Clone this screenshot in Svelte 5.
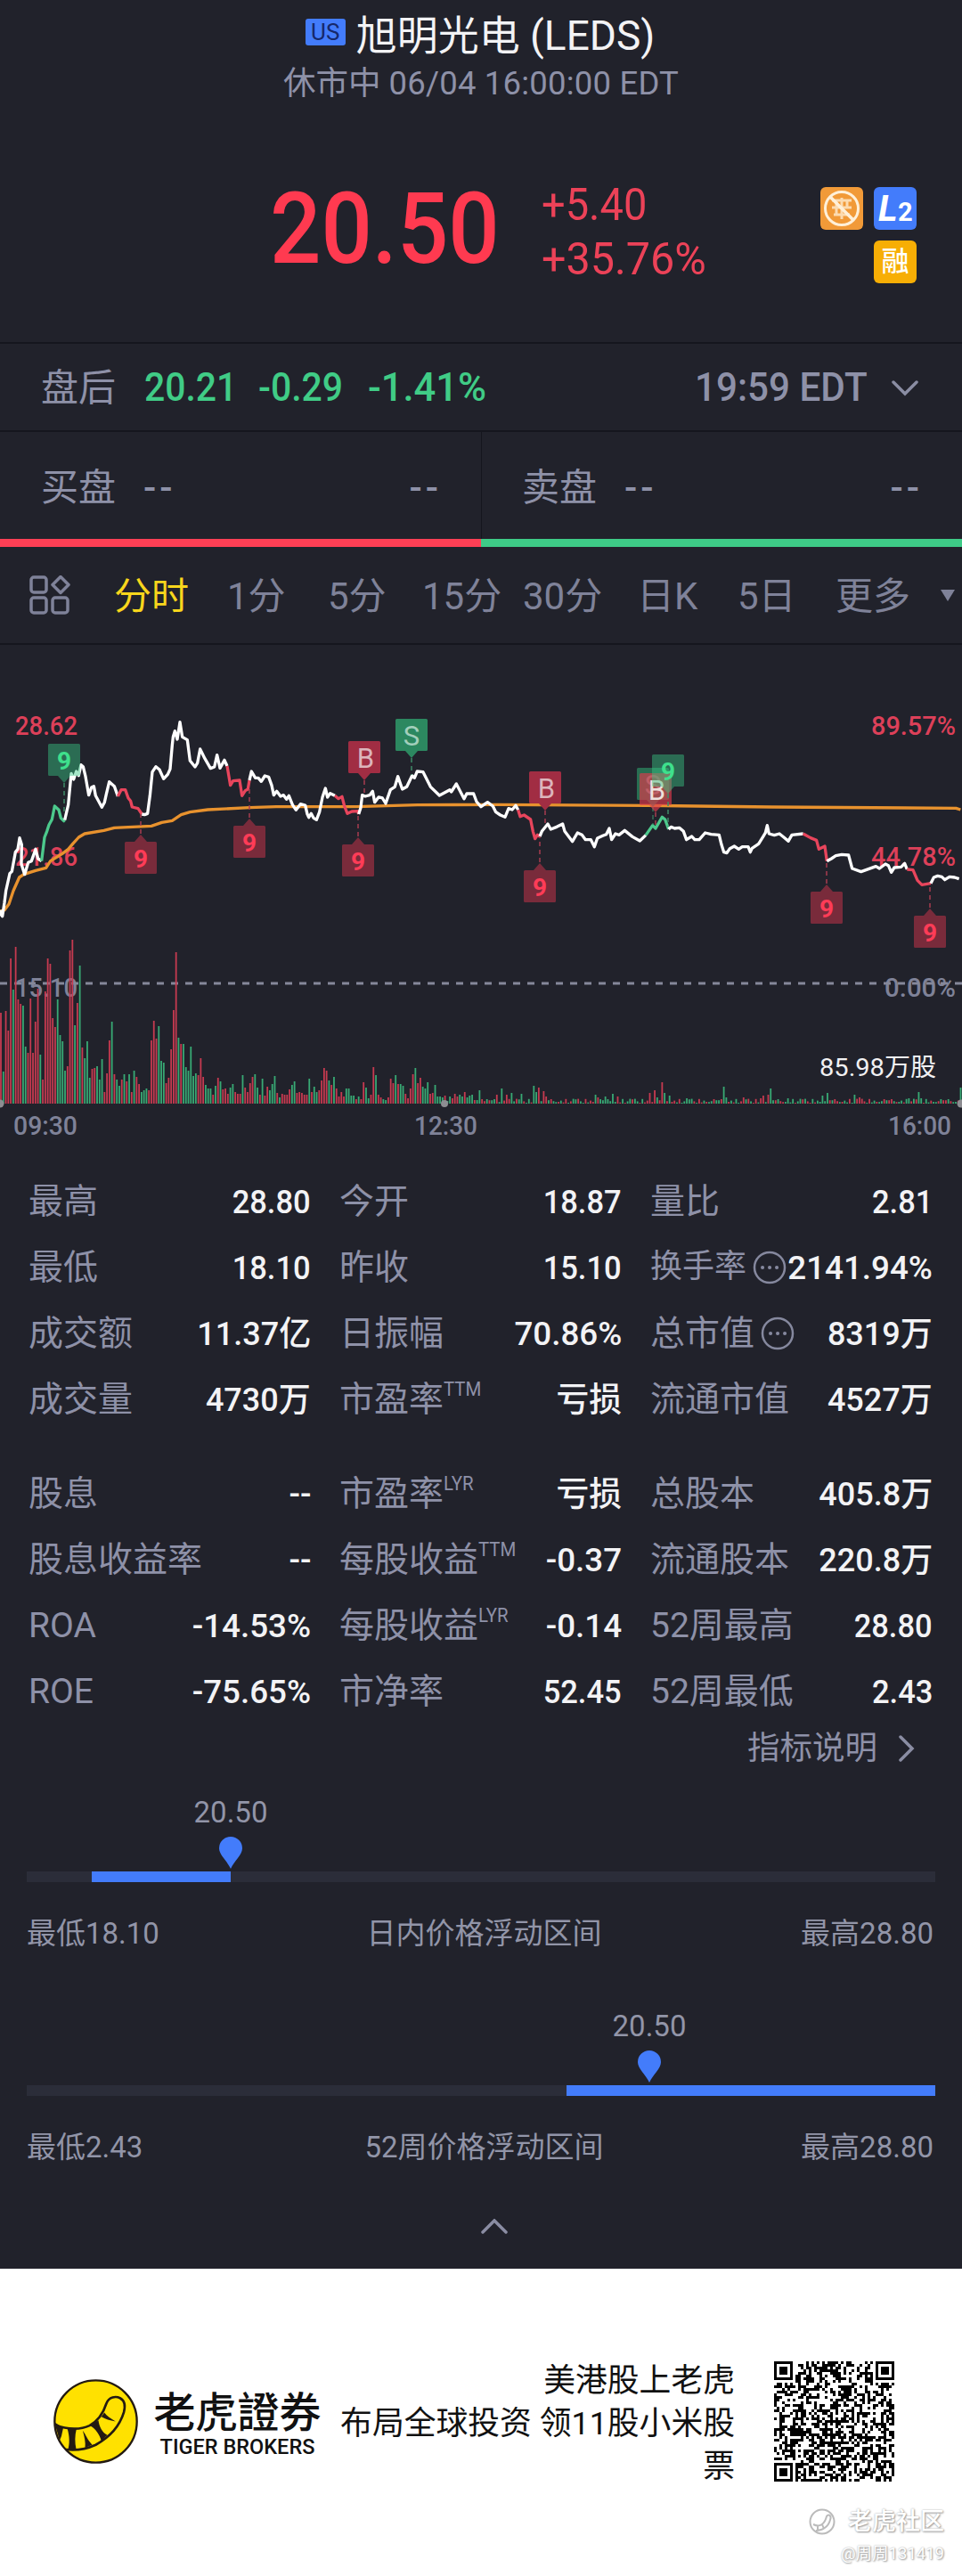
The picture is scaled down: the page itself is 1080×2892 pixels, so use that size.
<script lang="ts">
  const tabs = [
    { label: '分时', width: 83, gap: 44 },
    { label: '1分', width: 61, gap: 52 },
    { label: '5分', width: 63, gap: 43 },
    { label: '15分', width: 84, gap: 29 },
    { label: '30分', width: 87, gap: 41 },
    { label: '日K', width: 65, gap: 48 },
    { label: '5日', width: 59, gap: 51 },
    { label: '更多', width: 78, gap: 39 }
  ];

  const stats = [
    [
      { label: '最高', value: '28.80' },
      { label: '今开', value: '18.87' },
      { label: '量比', value: '2.81' },
      { label: '最低', value: '18.10' },
      { label: '昨收', value: '15.10' },
      { label: '换手率', value: '2141.94%', info: true, tight: true },
      { label: '成交额', value: '11.37亿' },
      { label: '日振幅', value: '70.86%' },
      { label: '总市值', value: '8319万', info: true },
      { label: '成交量', value: '4730万' },
      { label: '市盈率', sup: 'TTM', value: '亏损' },
      { label: '流通市值', value: '4527万' }
    ],
    [
      { label: '股息', value: '--' },
      { label: '市盈率', sup: 'LYR', value: '亏损' },
      { label: '总股本', value: '405.8万' },
      { label: '股息收益率', value: '--' },
      { label: '每股收益', sup: 'TTM', value: '-0.37' },
      { label: '流通股本', value: '220.8万' },
      { label: 'ROA', value: '-14.53%' },
      { label: '每股收益', sup: 'LYR', value: '-0.14' },
      { label: '52周最高', value: '28.80' },
      { label: 'ROE', value: '-75.65%' },
      { label: '市净率', value: '52.45' },
      { label: '52周最低', value: '2.43' }
    ]
  ];

  const ranges = [
    { title: '日内价格浮动区间', low: '最低18.10', high: '最高28.80', from: 73, to: 229, pin: 229 },
    { title: '52周价格浮动区间', low: '最低2.43', high: '最高28.80', from: 606, to: 1020, pin: 699 }
  ];

  // price line, three units to a pixel, split where the colour changes
  const price = [
    { tone: 'flat', dx: 0, d: '0,845 3,860 8,866 15,820 20,780 33,722 40,715 52,650 60,640 66,602 73,625 72,690 83,725 95,685 106,680 120,640 128,672 140,680' },
    { tone: 'up', dx: 0, d: '140,680 150,600 158,580 165,558 175,540 184,495 198,508 205,535 215,545 218,542' },
    { tone: 'flat', dx: 0, d: '218,542 230,490 240,385 248,405 257,378 265,392 273,356 280,362 288,395 299,458 308,432 316,428 322,460 343,499 352,482 358,455 368,413 385,428 397,462' },
    { tone: 'down', dx: 0, d: '397,462 408,440 422,440 432,468 440,478 445,498 465,503 478,522' },
    { tone: 'flat', dx: 0, d: '478,522 487,524 497,520 505,460 513,380 525,362 537,372 551,403 565,388 573,370 580,290 583,262 589,242 597,270 606,212 614,262 631,272 640,342 657,363 665,350 674,303 690,335 709,368 722,363 731,323 741,367 756,340 765,360' },
    { tone: 'down', dx: 0, d: '765,360 776,425 785,410 807,408 815,460 826,443 835,438 840,408' },
    { tone: 'flat', dx: 0, d: '840,408 847,378 860,400 870,400 880,412 892,393 905,397 915,425 922,458 932,445 945,462 955,458 965,472 973,460 985,490 997,508 1012,488 1028,492 1035,522 1040,533 1048,520 1056,535 1066,541 1076,515 1086,465 1096,435 1103,465 1112,452 1128,460' },
    { tone: 'down', dx: 1080, d: '48,460 60,470 72,463 80,495 90,520 105,513 125,512 128,522' },
    { tone: 'flat', dx: 1080, d: '128,522 135,500 140,458 150,462 165,458 175,445 182,482 195,465 208,468 219,486 235,440 250,430 260,395 275,438 290,430 308,392 316,400 325,378 345,380 370,430 400,459 435,440 440,447 457,420 483,470 492,453 515,453 525,480 540,497 562,482 580,495 590,515 605,525 621,532 633,503 645,507 657,493 665,508' },
    { tone: 'down', dx: 1080, d: '665,508 672,530 685,525 707,540 715,580 722,605 730,592 738,597' },
    { tone: 'flat', dx: 1080, d: '738,597 745,580 765,555 775,573 795,565 815,555 822,580 848,614 865,585 880,592 892,608 910,608 922,632 932,603 950,595 962,590 972,570 980,608 993,588 1005,592 1024,577 1050,598 1075,612 1095,593' },
    { tone: 'up', dx: 1080, d: '1095,593 1118,560 1128,570 1150,532 1160,540 1172,573' },
    { tone: 'flat', dx: 2100, d: '152,573 160,565 172,570 188,568 202,580 212,608 230,597 240,608 255,608 275,585 295,590 322,592 330,625 338,650 348,653 358,638 373,630 388,640 400,632 420,632 427,650 433,637 455,622 470,598 478,585 484,560 490,588 508,593 525,588 540,600 555,613 567,592 605,588' },
    { tone: 'down', dx: 2100, d: '605,588 630,602 650,610 658,640 678,630 685,680' },
    { tone: 'flat', dx: 2100, d: '685,680 700,672 715,662 735,658 758,660 770,705 800,716 825,707 850,698 862,705 882,690 892,695 902,718 912,702 935,700 947,688 955,708' },
    { tone: 'down', dx: 2100, d: '955,708 975,710 990,745 1005,760 1035,755' },
    { tone: 'flat', dx: 2100, d: '1035,755 1045,735 1058,730 1072,733 1082,743 1098,733 1115,735 1130,740' }
  ];

  const average = '0,850 15,845 30,825 45,780 65,735 80,725 120,712 155,703 170,680 210,655 230,640 245,622 265,600 285,588 350,577 385,568 510,562 545,550 580,544 610,524 640,515 700,507 840,500 930,497 1200,497 1405,491 1680,490 2180,493 2600,498 3220,502 3235,507';

  // x = left edge of the tag, y = top edge, stem = where the dashed line ends
  const tags = [
    { x: 54, y: 835, text: '9', kind: 'nine-up', down: true, stem: 912 },
    { x: 140, y: 945, text: '9', kind: 'nine-down', down: false, stem: 914 },
    { x: 262, y: 927, text: '9', kind: 'nine-down', down: false, stem: 886 },
    { x: 384, y: 948, text: '9', kind: 'nine-down', down: false, stem: 914 },
    { x: 391, y: 832, text: 'B', kind: 'buy-tag', down: true, stem: 890 },
    { x: 444, y: 807, text: 'S', kind: 'sell-tag', down: true, stem: 870 },
    { x: 588, y: 977, text: '9', kind: 'nine-down', down: false, stem: 939 },
    { x: 594, y: 866, text: 'B', kind: 'buy-tag', down: true, stem: 924 },
    { x: 715, y: 862, text: 'S', kind: 'sell-tag faded', down: true, stem: 926 },
    { x: 718, y: 868, text: 'B', kind: 'buy-tag mixed', down: true, stem: 928 },
    { x: 732, y: 847, text: '9', kind: 'nine-up', down: true, stem: 928 },
    { x: 910, y: 1001, text: '9', kind: 'nine-down', down: false, stem: 967 },
    { x: 1026, y: 1028, text: '9', kind: 'nine-down', down: false, stem: 993 }
  ];

  const volume = (
    'r102 g36 r104 r82 r163 g128 r176 r117 r112 g110 g64 r57 r118 r57 r92 r129 g55 r27 r126 r163 r157 r96 r86 g117 g77 g70 ' +
    'g37 r42 r172 r184 g88 r113 g155 r63 g51 g70 g29 r39 r40 g42 g27 g50 r13 r34 r71 g92 r33 g27 g20 r27 g33 r25 g33 r13 ' +
    'g37 r30 r22 g13 g15 g17 r15 r71 r93 r73 g87 g48 g46 r23 r29 r61 r105 r170 g74 r67 g67 g41 g37 g64 g31 g34 r32 r51 r30 ' +
    'g21 g17 g17 r10 g20 r29 g25 r16 r17 r11 g18 g22 r13 r11 r11 g32 r18 r13 r23 r30 g33 g18 r10 g28 r9 r19 g15 g22 g31 ' +
    'r12 g7 r11 r10 r10 r16 g21 g25 r12 r13 r12 r10 r10 g28 r13 g19 g13 r15 r26 r40 r37 g26 r21 g30 r17 r8 r13 r8 g17 g17 ' +
    'g9 g9 r5 g8 r5 r24 g18 g6 r10 r41 g32 r10 r7 g5 g4 r7 r28 r23 g32 r22 g22 g20 r11 r6 r17 r33 g40 r23 r29 g19 g17 g24 ' +
    'r11 r12 g21 g8 g8 g7 r9 g3 g8 r6 r11 r8 g10 g8 r13 g7 g9 g10 r4 g4 g15 r5'
  ).split(' ');

  // single minutes that stand out in the quiet afternoon
  const spikes = {
    201: 'r10', 203: 'g17', 205: 'r10', 207: 'g12', 211: 'g11', 216: 'g20', 217: 'g13', 218: 'r18', 220: 'r14', 221: 'r8',
    241: 'g10', 242: 'r7', 245: 'g8', 248: 'g11', 250: 'r8', 263: 'r12', 265: 'r15', 266: 'g7', 268: 'r24', 269: 'g12',
    271: 'g9', 278: 'g6', 293: 'g19', 294: 'g7', 301: 'r7', 308: 'r6', 309: 'r9', 311: 'r10', 312: 'g17', 319: 'g6',
    333: 'g9', 335: 'g12', 346: 'g10', 348: 'r7', 368: 'g6', 372: 'g13', 373: 'g6', 389: 'g18'
  };

  const bars = Array.from({ length: 390 }, (_, i) => {
    const quiet = (i * 7 + 3) % 11 < 5 ? 'r' : 'g';
    const item = volume[i] ?? spikes[i] ?? quiet + (1 + ((i * i * 3 + i * 5) % 23) / 5);
    return { x: 1 + i * 2.77, h: Number(item.slice(1)), up: item[0] === 'r' };
  });

  // plain prices are set narrower than percentages and amounts
  function squeeze(value) {
    if (/^[\d.]+$/.test(value)) return 'narrow';
    if (/^\d.*[万亿]$/.test(value)) return 'amount';
    return '';
  }

  const SIZE = 45;

  function finder(x, y) {
    for (const [fx, fy] of [[0, 0], [SIZE - 7, 0], [0, SIZE - 7]]) {
      const dx = x - fx;
      const dy = y - fy;
      if (dx < -1 || dy < -1 || dx > 7 || dy > 7) continue;
      const ring = Math.max(Math.abs(dx - 3), Math.abs(dy - 3));
      return ring === 3 || ring < 2 ? 1 : 0;
    }
    return -1;
  }

  function qrPath() {
    let d = '';
    let seed = 131419;
    for (let y = 0; y < SIZE; y++) {
      for (let x = 0; x < SIZE; x++) {
        seed = (seed * 1103515245 + 12345) % 2147483648;
        const f = finder(x, y);
        if (f === 1 || (f === -1 && seed / 2147483648 < 0.5)) d += `M${x} ${y}h1v1h-1z`;
      }
    }
    return d;
  }
</script>

<div class="page">
  <header class="top">
    <div class="title">
      <span class="market">US</span>
      <h1>旭明光电 (LEDS)</h1>
    </div>
    <p class="status">休市中 <span class="clock">06/04 16:00:00 EDT</span></p>
  </header>

  <section class="quote">
    <div class="last"><span class="num">20.50</span></div>
    <div class="change">
      <span class="num">+5.40</span>
      <span class="num percent">+35.76%</span>
    </div>
    <div class="badges">
      <svg class="badge" viewBox="0 0 48 48">
        <rect width="48" height="48" rx="6" fill="#f19a38" />
        <g fill="none" stroke="#fff0d8" stroke-width="3">
          <path d="M13 15h22M13 23h22M15 31h18M24 12v24M18 15v16M30 15v8" opacity=".75" />
          <circle cx="24" cy="24" r="18.5" />
          <path d="M11 11l26 26" stroke-width="3.5" />
        </g>
      </svg>
      <svg class="badge" viewBox="0 0 48 48">
        <rect width="48" height="48" rx="6" fill="#437cfb" />
        <text x="5" y="38" class="l2 big">L</text>
        <text x="27" y="38" class="l2">2</text>
      </svg>
      <span class="badge margin">融</span>
    </div>
  </section>

  <section class="after">
    <span class="name">盘后</span>
    <span class="num green p1">20.21</span>
    <span class="num green p2">-0.29</span>
    <span class="num green p3">-1.41%</span>
    <span class="num time">19:59 EDT</span>
    <svg class="chevron" viewBox="0 0 30 18"><path d="M2 2l13 13L28 2" /></svg>
  </section>

  <section class="book">
    <div class="side buy">
      <span>买盘</span><span class="dash">--</span><span class="dash end">--</span>
    </div>
    <div class="side sell">
      <span>卖盘</span><span class="dash">--</span><span class="dash end">--</span>
    </div>
  </section>

  <nav class="tabs">
    <svg class="grid-icon" viewBox="0 0 46 44">
      <rect x="2" y="2" width="17" height="17" rx="3" />
      <path d="M35 1.500l9 9-9 9-9-9z" stroke-linejoin="round" />
      <rect x="2" y="25" width="17" height="17" rx="3" />
      <rect x="26" y="25" width="17" height="17" rx="3" />
    </svg>
    {#each tabs as tab, i}
      <span class="tab" class:active={i === 0} style="width: {tab.width}px; margin-right: {tab.gap}px">{tab.label}</span>
    {/each}
    <svg class="more" viewBox="0 0 18 15"><path d="M1 1h16L9 14z" /></svg>
  </nav>

  <svg class="chart" viewBox="0 724 1080 566">
    <g class="axis red">
      <text x="17" y="825" textLength="70" lengthAdjust="spacingAndGlyphs">28.62</text>
      <text x="17" y="972" textLength="70" lengthAdjust="spacingAndGlyphs">21.86</text>
      <text x="978" y="825" textLength="95" lengthAdjust="spacingAndGlyphs">89.57%</text>
      <text x="978" y="972" textLength="95" lengthAdjust="spacingAndGlyphs">44.78%</text>
    </g>
    <g class="axis">
      <text x="17" y="1119" textLength="70" lengthAdjust="spacingAndGlyphs">15.10</text>
      <text x="993" y="1119" textLength="80" lengthAdjust="spacingAndGlyphs">0.00%</text>
    </g>
    <line class="zero" x1="0" y1="1104" x2="1080" y2="1104" />

    {#each bars as bar}
      <rect x={bar.x - 0.9} y={1239 - bar.h} width="1.800" height={bar.h} class={bar.up ? 'vol-up' : 'vol-down'} />
    {/each}

    <g transform="translate(0 740) scale(.33333)">
      <polyline class="average" points={average} />
      {#each price as part}
        <polyline class="line {part.tone}" points={part.d} transform="translate({part.dx} 0)" />
      {/each}
    </g>

    {#each tags as tag}
      <g class="tag {tag.kind}" transform="translate({tag.x} {tag.y})">
        {#if tag.down}
          <line x1="18" x2="18" y1="44" y2={tag.stem - tag.y} />
          <path d="M1.500 0h33q1.500 0 1.500 1.500v33q0 1.500-1.500 1.500H25l-7 8-7-8H1.500Q0 36 0 34.500v-33Q0 0 1.500 0z" />
        {:else}
          <line x1="18" x2="18" y1="-9" y2={tag.stem - tag.y} />
          <path d="M1.500 0H11l7-8 7 8h9.500q1.500 0 1.500 1.500v33q0 1.500-1.500 1.500h-33Q0 36 0 34.500v-33Q0 0 1.500 0z" />
        {/if}
        <text x={tag.text === 'B' ? 19.500 : 18} y={tag.text === '9' ? 28.500 : 30}>{tag.text}</text>
      </g>
    {/each}

    <text class="shares" x="920" y="1208" textLength="131" lengthAdjust="spacingAndGlyphs">85.98万股</text>

    <g fill="#8d8d92">
      <circle cx="0" cy="1239" r="4.500" />
      <circle cx="499" cy="1239" r="4" />
      <circle cx="1079" cy="1239" r="4.500" />
    </g>
    <g class="axis">
      <text x="15" y="1274" textLength="72" lengthAdjust="spacingAndGlyphs">09:30</text>
      <text x="465" y="1274" textLength="71" lengthAdjust="spacingAndGlyphs">12:30</text>
      <text x="997" y="1274" textLength="71" lengthAdjust="spacingAndGlyphs">16:00</text>
    </g>
  </svg>

  <section class="stats">
    {#each stats as group}
      <div class="group">
        {#each group as item}
          <div class="stat">
            <span class="label" class:tight={item.tight}>
              {item.label}{#if item.sup}<sup>{item.sup}</sup>{/if}
            </span>
            {#if item.info}
              <svg class="info" class:pull={item.tight} viewBox="0 0 38 38">
                <circle cx="19" cy="19" r="17" />
                <path d="M11 19h.1M19 19h.1M27 19h.1" />
              </svg>
            {/if}
            <span class="value num {squeeze(item.value)}">{item.value}</span>
          </div>
        {/each}
      </div>
    {/each}
    <div class="explain">
      <span>指标说明</span>
      <svg viewBox="0 0 18 30"><path d="M2 2l13 13L2 28" /></svg>
    </div>
  </section>

  <section class="ranges">
    {#each ranges as range}
      <div class="range">
        <div class="pointer" style="margin-left: {range.pin - 60}px">
          <span>20.50</span>
          <svg viewBox="0 0 26 36"><path d="M13 36C9 27 0 20.500 0 13a13 13 0 0 1 26 0C26 20.500 17 27 13 36z" /></svg>
        </div>
        <div class="track">
          <div class="fill" style="margin-left: {range.from}px; width: {range.to - range.from}px"></div>
        </div>
        <div class="legend">
          <span>{range.low}</span>
          <span class="name">{range.title}</span>
          <span class="high">{range.high}</span>
        </div>
      </div>
    {/each}
    <svg class="collapse" viewBox="0 0 30 18"><path d="M2 15L15 2l13 13" /></svg>
  </section>

  <footer>
    <svg class="logo" viewBox="30 33 286 286">
      <circle cx="173" cy="176" r="139" fill="#ffe100" stroke="#231a12" stroke-width="7" />
      <g fill="none" stroke="#231a12" stroke-width="8">
        <path d="M36 187C80 206 125 203 152 190C186 172 200 143 209 115C218 92 241 90 255 97C272 106 274 122 268 145C252 198 215 232 173 255C140 270 105 275 72 271" />
      </g>
      <g fill="#231a12">
        <path d="M33 178l30 20-6 28-6 14z" />
        <path d="M77 200h31c-6 24-6 46-1 70l-28 2c6-20 6-46-2-72z" />
        <path d="M129 207c12 16 14 28 32 48l-24 10c2-20-2-36-8-58z" />
        <path d="M154 190l28-18c3 22 12 40 30 50l-20 20c-6-22-18-40-38-52z" />
        <path d="M192 160l10-14c8 12 22 20 38 30-20-4-34-8-48-16z" />
      </g>
    </svg>
    <div class="brand">
      <strong>老虎證券</strong>
      <span>TIGER BROKERS</span>
    </div>
    <p class="slogan">美港股上老虎<br />布局全球投资 领11股小米股票</p>
    <svg class="qr" viewBox="0 0 45 45" shape-rendering="crispEdges"><path d={qrPath()} /></svg>
    <div class="watermark">
      <div class="community">
        <svg viewBox="0 0 30 30">
          <circle cx="15" cy="15" r="13.500" />
          <path d="M5 18c8 4 13-1 15-9 2-3 6-1 4 4-2 8-9 12-16 12M10 19v5M15 18l2 5" />
        </svg>
        <span>老虎社区</span>
      </div>
      <span class="user">@周周131419</span>
    </div>
  </footer>
</div>

<style>
  :global(body) {
    margin: 0;
    background: #fff;
  }

  .page {
    width: 1080px;
    height: 2892px;
    overflow: hidden;
    color: #8e91a8;
    background: #21222b;
    font-family: Roboto, 'Noto Sans CJK SC', sans-serif;
    line-height: 1.2;
  }

  .num {
    display: inline-block;
    transform-origin: left;
  }

  svg {
    display: block;
    flex: none;
  }

  .top {
    height: 130px;
    padding-top: 9px;
    box-sizing: border-box;
  }

  .title {
    display: flex;
    justify-content: center;
    gap: 12px;
    height: 62px;
    margin-right: 2px;
  }

  .market {
    width: 45px;
    height: 30px;
    margin-top: 12px;
    border-radius: 3px;
    background: #437cfb;
    color: #16286a;
    font-size: 26px;
    line-height: 31px;
    text-align: center;
  }

  h1 {
    margin: 0;
    color: #f3f3f5;
    font-size: 46px;
    font-weight: 400;
    line-height: 62px;
  }

  .status {
    margin: 0;
    font-size: 36.500px;
    line-height: 46px;
    text-align: center;
  }

  .clock {
    letter-spacing: 0.2px;
  }

  .quote {
    display: flex;
    height: 254px;
    padding-left: 303px;
  }

  .last {
    width: 305px;
    color: #ff3a50;
    font-size: 111px;
    font-weight: 500;
    line-height: 254px;
  }

  .last .num {
    transform: scaleX(0.91);
  }

  .change {
    display: flex;
    flex-direction: column;
    width: 313px;
    padding-top: 70px;
    color: #ec4258;
    font-size: 50px;
    line-height: 61px;
  }

  .change .num {
    transform: scaleX(0.94);
  }

  .change .percent {
    transform: scaleX(0.97);
  }

  .badges {
    display: flex;
    flex-wrap: wrap;
    align-content: flex-start;
    justify-content: flex-end;
    gap: 12px;
    width: 108px;
    padding-top: 80px;
  }

  .badge {
    width: 48px;
    height: 48px;
  }

  .l2 {
    fill: #fff;
    font-size: 29px;
    font-weight: 700;
  }

  .l2.big {
    font-size: 41px;
    font-style: italic;
  }

  .margin {
    border-radius: 6px;
    background: #f7ae05;
    color: #fff;
    font-size: 31px;
    font-weight: 500;
    line-height: 47px;
    text-align: center;
  }

  .after {
    display: flex;
    align-items: center;
    height: 94px;
    padding: 3px 49px 0 46px;
    border-top: 2px solid #15161e;
    border-bottom: 2px solid #15161e;
    font-size: 43.500px;
  }

  .after .name {
    width: 116px;
    font-size: 42px;
  }

  .after .num {
    font-weight: 500;
    transform: scaleX(0.94);
  }

  .green {
    color: #40cc86;
  }

  .p1 {
    width: 128px;
  }

  .p2 {
    width: 123px;
  }

  .after .p3 {
    transform: none;
  }

  .after .time {
    margin-left: auto;
    margin-right: 27px;
    transform: scaleX(0.97);
    transform-origin: right;
  }

  .chevron {
    width: 30px;
  }

  .chevron path,
  .collapse path,
  .explain path {
    fill: none;
    stroke: #8a8da3;
    stroke-width: 3.500;
    stroke-linecap: round;
  }

  .book {
    display: flex;
    height: 129px;
  }

  .side {
    display: flex;
    flex: 1;
    align-items: center;
    box-sizing: border-box;
    padding: 6px 46px 0;
    border-bottom: 9px solid #ff3f55;
    font-size: 42px;
  }

  .sell {
    border-bottom-color: #3ecb87;
    box-shadow: inset 1px 0 #15161e;
  }

  .dash {
    margin-left: 31px;
    letter-spacing: 4px;
    font-weight: 500;
    font-size: 42px;
  }

  .dash.end {
    margin-left: auto;
    margin-right: -2px;
  }

  .tabs {
    display: flex;
    align-items: center;
    height: 108px;
    padding-left: 33px;
    border-bottom: 2px solid #15161e;
    overflow: hidden;
    white-space: nowrap;
    color: #7f8299;
  }

  .tab {
    flex: none;
    padding-top: 5px;
    font-size: 42px;
  }

  .active {
    color: #f8d61c;
  }

  .grid-icon {
    width: 46px;
    margin-right: 49px;
    fill: none;
    stroke: #7f8299;
    stroke-width: 3.500;
  }

  .more {
    width: 18px;
    fill: #7f8299;
  }

  .chart {
    width: 1080px;
    height: 566px;
  }

  .axis {
    fill: #7f8298;
    font-size: 30px;
    font-weight: 500;
  }

  .axis.red {
    fill: #dd4059;
  }

  .zero {
    stroke: #85889a;
    stroke-width: 3;
    stroke-dasharray: 8 8;
  }

  .vol-up {
    fill: #c63a50;
  }

  .vol-down {
    fill: #38a974;
  }

  .line,
  .average {
    fill: none;
    stroke-width: 10;
    stroke-linejoin: round;
  }

  .average {
    stroke: #e8922e;
  }

  .flat {
    stroke: #fff;
  }

  .up {
    stroke: #4cc98c;
  }

  .down {
    stroke: #e8455c;
  }

  .tag text {
    font-size: 31px;
    text-anchor: middle;
    fill: #dcb4bb;
  }

  .tag line {
    stroke: #a83c50;
    stroke-width: 1.500;
    stroke-dasharray: 5 4;
  }

  .buy-tag path {
    fill: #a12d43;
  }

  .sell-tag path {
    fill: #2c8860;
  }

  .tag.sell-tag text {
    fill: #a3cfbc;
  }

  .sell-tag line,
  .nine-up line {
    stroke: #3f8a68;
  }

  .faded {
    opacity: 0.75;
  }

  .mixed path {
    fill: #e0394b;
    fill-opacity: 0.65;
  }

  .tag.mixed text {
    fill: #eee0dc;
  }

  .nine-down path {
    fill: #ff3a55;
    fill-opacity: 0.4;
  }

  .tag.nine-down text,
  .tag.nine-up text {
    fill: #ff3c57;
    font-size: 28px;
    font-weight: 700;
  }

  .nine-up path {
    fill: #38c884;
    fill-opacity: 0.45;
  }

  .tag.nine-up text {
    fill: #3ee08c;
  }

  .shares {
    fill: #f1f1f3;
    font-size: 28px;
  }

  .stats {
    padding: 22px 33px 0 32px;
  }

  .group {
    display: grid;
    grid-template-columns: repeat(3, 317px);
    grid-auto-rows: 74px;
    column-gap: 32px;
    margin-bottom: 32px;
  }

  .stat {
    display: flex;
    align-items: center;
    white-space: nowrap;
  }

  .label {
    font-size: 39px;
  }

  .label.tight {
    font-size: 36px;
  }

  sup {
    display: inline-block;
    font-size: 22px;
    line-height: 20px;
    vertical-align: 17px;
    transform: scaleX(0.93);
    transform-origin: left;
  }

  .info {
    width: 38px;
    margin-left: 7px;
    fill: none;
    stroke: #85889e;
    stroke-width: 2.500;
  }

  .info.pull {
    margin-right: -20px;
  }

  .info path {
    stroke-width: 4;
    stroke-linecap: round;
  }

  .value {
    margin-left: auto;
    color: #f3f3f5;
    font-size: 37.500px;
    font-weight: 500;
    transform: scaleX(0.98);
    transform-origin: right;
  }

  .value.narrow {
    transform: scaleX(0.92);
  }

  .value.amount {
    transform: scaleX(0.96);
  }

  .explain {
    display: flex;
    align-items: center;
    justify-content: flex-end;
    gap: 24px;
    height: 53px;
    margin-top: -32px;
    padding-right: 20px;
    font-size: 36.500px;
  }

  .explain svg {
    width: 18px;
  }

  .ranges {
    height: 558px;
    box-sizing: border-box;
    padding: 22px 30px 0;
    color: #9295a8;
    font-size: 33px;
  }

  .range {
    height: 240px;
  }

  .pointer {
    display: flex;
    flex-direction: column;
    align-items: center;
    width: 120px;
    height: 90px;
  }

  .pointer span {
    line-height: 48px;
    margin-bottom: 3px;
  }

  .pointer svg {
    width: 26px;
    fill: #437cfb;
  }

  .track,
  .fill {
    height: 12px;
  }

  .track {
    background: #2b2d39;
  }

  .fill {
    background: #437cfb;
  }

  .legend {
    display: grid;
    grid-template-columns: 1fr auto 1fr;
    padding: 33px 2px 0 0;
    line-height: 50px;
  }

  .legend .name {
    margin-left: 9px;
  }

  .legend .high {
    text-align: right;
  }

  .collapse {
    width: 30px;
    margin-left: 510px;
  }

  footer {
    display: flex;
    position: relative;
    box-sizing: border-box;
    height: 346px;
    padding: 104px 0 0 60px;
    background: #fff;
    color: #111;
  }

  .logo {
    width: 95px;
    height: 95px;
    margin-top: 20px;
  }

  .brand {
    display: flex;
    flex-direction: column;
    align-items: center;
    width: 187px;
    margin: 30px 0 0 18px;
    white-space: nowrap;
  }

  .brand strong {
    font-family: 'Noto Sans CJK TC', sans-serif;
    font-size: 47px;
    font-weight: 500;
    line-height: 48px;
  }

  .brand span {
    margin-top: 5px;
    font-size: 23.500px;
    font-weight: 500;
    line-height: 26px;
  }

  .slogan {
    width: 450px;
    margin: -2px 0 0 15px;
    font-size: 35.800px;
    line-height: 48px;
    text-align: right;
  }

  .qr {
    width: 135px;
    height: 135px;
    margin-left: 44px;
  }

  .watermark {
    position: absolute;
    right: 20px;
    bottom: 9px;
    display: flex;
    flex-direction: column;
    align-items: flex-end;
    color: #fff;
    text-shadow: 1px 1px 2px #999, 0 0 2px #aaa;
  }

  .community {
    display: flex;
    align-items: center;
    gap: 14px;
    font-size: 27px;
    font-weight: 500;
    line-height: 38px;
  }

  .community svg {
    width: 30px;
    fill: none;
    stroke: #bbb;
    stroke-width: 2;
  }

  .user {
    font-size: 18.500px;
    line-height: 34px;
  }
</style>
